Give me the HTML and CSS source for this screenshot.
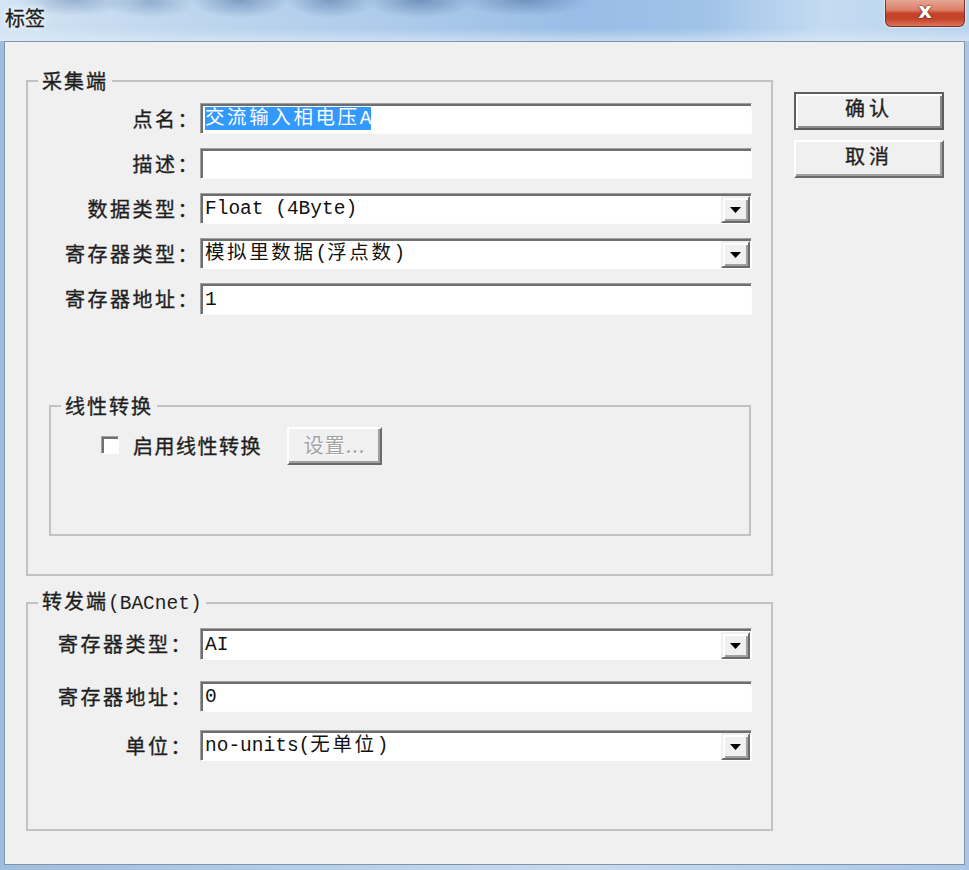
FILE: index.html
```html
<!DOCTYPE html>
<html lang="zh-CN">
<head>
<meta charset="utf-8">
<title>标签</title>
<link rel="stylesheet" href="styles.css">
</head>
<body>
<div class="window">
  <div class="titlebar">
    <span class="title">标签</span>
    <div class="close"><span class="close-x">x</span></div>
  </div>
  <div class="client">
    <div class="main">
      <fieldset class="group g1">
        <legend>采集端</legend>
        <div class="row">
          <label>点名：</label>
          <div class="field"><span class="sel"><span class="cj">交流输入相电压</span>A</span></div>
        </div>
        <div class="row">
          <label>描述：</label>
          <div class="field"></div>
        </div>
        <div class="row">
          <label>数据类型：</label>
          <div class="field combo"><span class="val">Float (4Byte)</span><span class="drop"><svg width="11" height="6" viewBox="0 0 11 6"><polygon points="0,0 11,0 5.5,6" fill="#000"/></svg></span></div>
        </div>
        <div class="row">
          <label>寄存器类型：</label>
          <div class="field combo"><span class="val"><span class="cj">模拟里数据</span>(<span class="cj">浮点数</span>)</span><span class="drop"><svg width="11" height="6" viewBox="0 0 11 6"><polygon points="0,0 11,0 5.5,6" fill="#000"/></svg></span></div>
        </div>
        <div class="row row-gap">
          <label>寄存器地址：</label>
          <div class="field"><span class="val">1</span></div>
        </div>
        <fieldset class="group linear">
          <legend>线性转换</legend>
          <div class="check-row">
            <span class="checkbox"></span>
            <span class="check-label">启用线性转换</span>
            <button class="btn disabled" type="button">设置...</button>
          </div>
        </fieldset>
      </fieldset>
      <fieldset class="group g2">
        <legend>转发端<span class="lat">(BACnet)</span></legend>
        <div class="row r1">
          <label>寄存器类型：</label>
          <div class="field combo"><span class="val">AI</span><span class="drop"><svg width="11" height="6" viewBox="0 0 11 6"><polygon points="0,0 11,0 5.5,6" fill="#000"/></svg></span></div>
        </div>
        <div class="row r2">
          <label>寄存器地址：</label>
          <div class="field"><span class="val">0</span></div>
        </div>
        <div class="row r3">
          <label>单位：</label>
          <div class="field combo"><span class="val">no-units(<span class="cj">无单位</span>)</span><span class="drop"><svg width="11" height="6" viewBox="0 0 11 6"><polygon points="0,0 11,0 5.5,6" fill="#000"/></svg></span></div>
        </div>
      </fieldset>
    </div>
    <div class="side">
      <button class="btn default" type="button">确认</button>
      <button class="btn" type="button">取消</button>
    </div>
  </div>
</div>
</body>
</html>
```

FILE: styles.css
```css
* { box-sizing: border-box; }
html, body { margin: 0; padding: 0; }
body {
  width: 969px;
  height: 870px;
  overflow: hidden;
  font-family: "Noto Sans CJK SC", "Liberation Sans", sans-serif;
  color: #222;
  background: linear-gradient(90deg, #9fbddd 0%, #b4cde8 30%, #c9dcef 60%, #a9c6e6 100%);
}
.window {
  width: 969px;
  height: 870px;
  display: flex;
  flex-direction: column;
}
.titlebar {
  height: 41px;
  flex: none;
  display: flex;
  justify-content: space-between;
  align-items: flex-start;
  padding: 0 4px 0 5px;
  background:
    radial-gradient(ellipse 55px 16px at 75px 0, rgba(110,140,178,.55), transparent),
    radial-gradient(ellipse 45px 16px at 150px 2px, rgba(100,135,178,.5), transparent),
    radial-gradient(ellipse 50px 18px at 240px 0, rgba(85,120,168,.6), transparent),
    radial-gradient(ellipse 45px 18px at 330px 0, rgba(85,120,168,.6), transparent),
    radial-gradient(ellipse 55px 18px at 420px 0, rgba(75,110,158,.6), transparent),
    radial-gradient(ellipse 65px 16px at 525px 0, rgba(75,110,158,.55), transparent),
    linear-gradient(180deg, rgba(255,255,255,0) 0%, rgba(255,255,255,0) 70%, rgba(225,236,247,.6) 100%),
    linear-gradient(90deg, #d3e4f4 0%, #c0d7ee 18%, #aecbeb 40%, #98bde6 60%, #9fc2e8 72%, #c4dbf1 85%, #b9d3ee 100%);
}
.title {
  font-size: 20px;
  line-height: 22px;
  margin-top: 7px;
  color: #1c1c1c;
  -webkit-text-stroke: 0.3px #1c1c1c;
  text-shadow: 0 0 6px #fff, 0 0 10px #fff;
}
.close {
  width: 80px;
  height: 27px;
  border: 1px solid #7d3324;
  border-top: none;
  border-radius: 0 0 6px 6px;
  background: linear-gradient(180deg, #e6a594 0%, #dc8068 38%, #c5432a 52%, #c3442a 72%, #d9745a 100%);
  box-shadow: 0 0 0 1px rgba(255,255,255,.45);
  display: flex;
  align-items: flex-start;
  justify-content: center;
  padding-top: 1px;
}
.close-x {
  font-family: "DejaVu Sans", sans-serif;
  font-weight: bold;
  font-size: 21px;
  line-height: 20px;
  color: #fff;
  text-shadow: 0 0 2px #5b1d12, 0 0 1px #5b1d12;
}
.client {
  margin: 0 4px;
  height: 824px;
  flex: none;
  border: 1px solid #8294ab;
  background: #f0f0f0;
  display: flex;
  align-items: flex-start;
  padding: 28px 0 0 21px;
}
.main {
  width: 747px;
  flex: none;
  display: flex;
  flex-direction: column;
}
.group {
  margin: 0;
  min-width: 0;
  border: 2px solid #c2c2c2;
  padding: 0;
}
.group legend {
  margin-left: 10px;
  padding: 0 4px;
  font-size: 20px;
  line-height: 22px;
  letter-spacing: 2px;
  color: #1e1e1e;
  -webkit-text-stroke: 0.35px #1e1e1e;
}
.lat {
  font-family: "Liberation Mono", monospace;
  font-size: 19.5px;
  letter-spacing: 0;
  -webkit-text-stroke: 0;
}
.g1 { padding: 11px 0 38px 0; }
.g2 { margin-top: 14px; padding: 13px 0 68px 0; }
.row {
  display: grid;
  grid-template-columns: 172px 552px;
  align-items: center;
  height: 31px;
  margin-bottom: 14px;
}
.row.row-gap { margin-top: 5px; margin-bottom: 0; height: 32px; }
.g2 .row { grid-template-columns: 165px 552px; column-gap: 7px; }
.g2 .r1 { height: 32px; margin-bottom: 21px; }
.g2 .r2 { margin-bottom: 18px; }
.g2 .r3 { margin-bottom: 0; }
.row label {
  text-align: right;
  font-size: 20px;
  line-height: 22px;
  letter-spacing: 2.5px;
  color: #1e1e1e;
  -webkit-text-stroke: 0.35px #1e1e1e;
  white-space: nowrap;
}
.field {
  height: 100%;
  background: #fff;
  border-top: 1px solid #a0a0a0;
  border-left: 1px solid #a0a0a0;
  border-right: 1px solid #fdfdfd;
  border-bottom: 1px solid #fdfdfd;
  box-shadow: inset 2px 2px 0 #6e6e6e;
  display: flex;
  align-items: center;
  padding-left: 4px;
  font-family: "Liberation Mono", "Noto Sans CJK SC", monospace;
  font-size: 19.5px;
  line-height: 22px;
  color: #111;
  white-space: nowrap;
}
.field .val { flex: 1; padding-top: 1px; }
.cj { letter-spacing: 2.6px; }
.sel {
  background: #3399ff;
  color: #fff;
  line-height: 22px;
  padding-top: 1px;
}
.combo { padding-right: 1px; }
.drop {
  width: 29px;
  height: 27px;
  margin-top: 2px;
  flex: none;
  background: #f0f0f0;
  border: 2px solid;
  border-color: #f0f0f0 #6a6a6a #6a6a6a #f0f0f0;
  box-shadow: inset 2px 2px 0 #fff, inset -2px -2px 0 #a0a0a0;
  display: flex;
  align-items: center;
  justify-content: center;
}
.drop svg { display: block; margin-top: 1px; }
.linear {
  margin: 80px 0 0 21px;
  width: 702px;
  padding: 10px 0 69px 0;
}
.check-row {
  display: flex;
  align-items: center;
  height: 38px;
  margin-left: 50px;
}
.checkbox {
  width: 18px;
  height: 18px;
  margin-top: -2px;
  background: #fff;
  border-top: 1px solid #a0a0a0;
  border-left: 1px solid #a0a0a0;
  border-right: 1px solid #fff;
  border-bottom: 1px solid #fff;
  box-shadow: inset 2px 2px 0 #707070;
}
.check-label {
  margin-left: 14px;
  font-size: 20px;
  line-height: 22px;
  letter-spacing: 1.5px;
  color: #1e1e1e;
  -webkit-text-stroke: 0.35px #1e1e1e;
}
.btn {
  font-family: "Noto Sans CJK SC", sans-serif;
  font-size: 20px;
  line-height: 22px;
  letter-spacing: 4px;
  color: #1e1e1e;
  -webkit-text-stroke: 0.35px #1e1e1e;
  background: #f0f0f0;
  border: 2px solid;
  border-color: #fff #6a6a6a #6a6a6a #fff;
  box-shadow: inset -2px -2px 0 #a0a0a0;
  padding: 0;
  margin: 0;
}
.btn.disabled {
  width: 95px;
  height: 38px;
  margin-left: 25px;
  color: #a3a3a3;
  -webkit-text-stroke: 0;
  letter-spacing: 1px;
  text-shadow: 1px 1px 0 #fff;
  padding-bottom: 3px;
}
.side {
  margin: 22px 0 0 21px;
  display: flex;
  flex-direction: column;
  gap: 10px;
}
.side .btn {
  width: 150px;
  height: 38px;
  padding-bottom: 6px;
}
.btn.default {
  border-color: #5e5e5e;
  box-shadow: inset 2px 2px 0 #fff, inset -2px -2px 0 #8a8a8a;
}
```
